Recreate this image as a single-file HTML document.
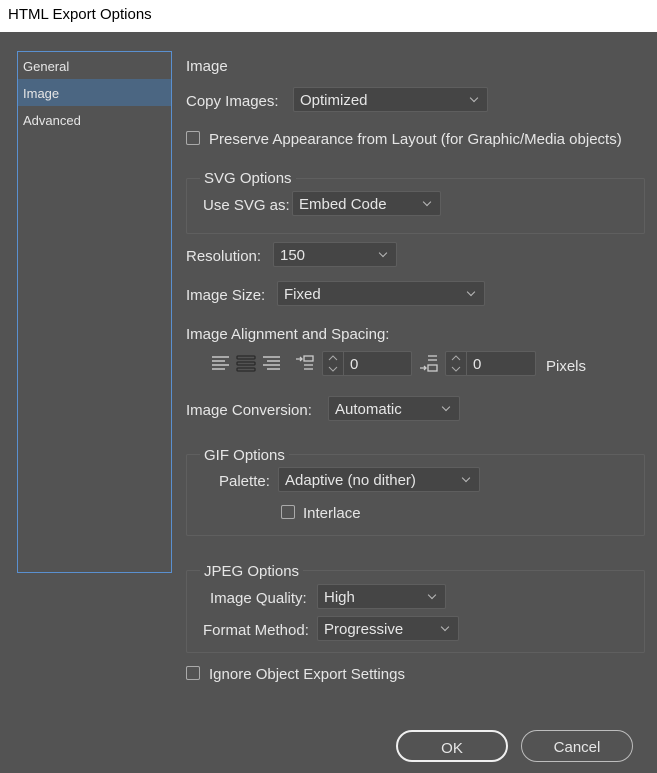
<!DOCTYPE html>
<html><head><style>
*{box-sizing:border-box;margin:0;padding:0}
body{width:657px;height:773px;background:#535353;font-family:"Liberation Sans",sans-serif;font-size:15px;color:#e6e6e6;position:relative;overflow:hidden}
.a{position:absolute;white-space:nowrap}
.t{margin-top:1px}
.title{left:0;top:0;width:657px;height:32px;background:#fff;color:#000;font-size:15px;padding:6px 0 0 8px}
.side{left:17px;top:51px;width:155px;height:522px;border:1px solid #5a90d0}
.side div{height:27px;padding:7px 0 0 5px;font-size:13px}
.dd{position:absolute;height:25px;background:#454545;border:1px solid #5e5e5e;border-radius:2px;padding:4px 0 0 6px}
.dd:after{content:"";position:absolute;right:10px;top:7px;width:5px;height:5px;border-right:1px solid #bbb;border-bottom:1px solid #bbb;transform:rotate(45deg)}
.cb{position:absolute;width:14px;height:14px;border:1px solid #aaa;border-radius:2px}
.grp{position:absolute;border:1px solid #5f5f5f;border-radius:2px}
.btn{position:absolute;height:32px;border-radius:16px;text-align:center;padding-top:8px}
.num{position:absolute;height:25px;background:#454545;border:1px solid #5e5e5e;border-radius:2px}
.num svg{position:absolute;left:0;top:0}
.num .v{position:absolute;left:27px;top:4px}
</style></head><body>
<div class="a title">HTML Export Options</div>
<div class="a side"><div>General</div><div style="background:#4b6682">Image</div><div>Advanced</div></div>

<div class="a t" style="left:186px;top:57px">Image</div>
<div class="a t" style="left:186px;top:92px">Copy Images:</div>
<div class="dd" style="left:293px;top:87px;width:195px">Optimized</div>
<div class="cb" style="left:186px;top:131px"></div>
<div class="a t" style="left:209px;top:130px">Preserve Appearance from Layout (for Graphic/Media objects)</div>

<div class="grp" style="left:186px;top:178px;width:459px;height:56px"></div>
<div class="a t" style="left:200px;top:169px;background:#535353;padding:0 4px">SVG Options</div>
<div class="a t" style="left:203px;top:196px">Use SVG as:</div>
<div class="dd" style="left:292px;top:191px;width:149px">Embed Code</div>

<div class="a t" style="left:186px;top:247px">Resolution:</div>
<div class="dd" style="left:273px;top:242px;width:124px">150</div>
<div class="a t" style="left:186px;top:286px">Image Size:</div>
<div class="dd" style="left:277px;top:281px;width:208px">Fixed</div>
<div class="a t" style="left:186px;top:325px">Image Alignment and Spacing:</div>

<svg class="a" style="left:210px;top:355px" width="80" height="20">
<g stroke="#c8c8c8" stroke-width="1.5"><line x1="2" y1="2" x2="19" y2="2"/><line x1="2" y1="6" x2="15" y2="6"/><line x1="2" y1="10" x2="19" y2="10"/><line x1="2" y1="14" x2="15" y2="14"/></g>
<g stroke="#2a2a2a" fill="none" stroke-width="1.3"><rect x="27" y="1" width="18" height="3" rx="1"/><rect x="27" y="7" width="18" height="3" rx="1"/><rect x="27" y="13" width="18" height="3" rx="1"/></g>
<g stroke="#c8c8c8" stroke-width="1.5"><line x1="53" y1="2" x2="70" y2="2"/><line x1="57" y1="6" x2="70" y2="6"/><line x1="53" y1="10" x2="70" y2="10"/><line x1="57" y1="14" x2="70" y2="14"/></g>
</svg>
<svg class="a" style="left:294px;top:354px" width="24" height="20"><g stroke="#ccc" fill="none" stroke-width="1.3"><path d="M2 5h6M6 3l2 2-2 2"/><rect x="10" y="2" width="9" height="5"/><line x1="10" y1="11" x2="19" y2="11"/><line x1="10" y1="15" x2="19" y2="15"/></g></svg>
<div class="num" style="left:322px;top:351px;width:90px"><svg width="21" height="23"><line x1="20.5" y1="0" x2="20.5" y2="23" stroke="#5e5e5e"/><path d="M6 8l4-4 4 4M6 15l4 4 4-4" stroke="#aaa" fill="none"/></svg><div class="v">0</div></div>
<svg class="a" style="left:418px;top:354px" width="24" height="20"><g stroke="#ccc" fill="none" stroke-width="1.3"><line x1="10" y1="2" x2="19" y2="2"/><line x1="10" y1="6" x2="19" y2="6"/><rect x="10" y="11" width="9" height="6"/><path d="M2 14h6M6 12l2 2-2 2"/></g></svg>
<div class="num" style="left:445px;top:351px;width:91px"><svg width="21" height="23"><line x1="20.5" y1="0" x2="20.5" y2="23" stroke="#5e5e5e"/><path d="M6 8l4-4 4 4M6 15l4 4 4-4" stroke="#aaa" fill="none"/></svg><div class="v">0</div></div>
<div class="a t" style="left:546px;top:357px">Pixels</div>

<div class="a t" style="left:186px;top:401px">Image Conversion:</div>
<div class="dd" style="left:328px;top:396px;width:132px">Automatic</div>

<div class="grp" style="left:186px;top:454px;width:459px;height:82px"></div>
<div class="a t" style="left:200px;top:446px;background:#535353;padding:0 4px">GIF Options</div>
<div class="a t" style="left:219px;top:472px">Palette:</div>
<div class="dd" style="left:278px;top:467px;width:202px">Adaptive (no dither)</div>
<div class="cb" style="left:281px;top:505px"></div>
<div class="a t" style="left:303px;top:504px">Interlace</div>

<div class="grp" style="left:186px;top:570px;width:459px;height:83px"></div>
<div class="a t" style="left:200px;top:562px;background:#535353;padding:0 4px">JPEG Options</div>
<div class="a t" style="left:210px;top:589px">Image Quality:</div>
<div class="dd" style="left:317px;top:584px;width:129px">High</div>
<div class="a t" style="left:203px;top:621px">Format Method:</div>
<div class="dd" style="left:317px;top:616px;width:142px">Progressive</div>

<div class="cb" style="left:186px;top:666px"></div>
<div class="a t" style="left:209px;top:665px">Ignore Object Export Settings</div>

<div class="btn" style="left:396px;top:730px;width:112px;border:2px solid #f0f0f0">OK</div>
<div class="btn" style="left:521px;top:730px;width:112px;border:1px solid #bdbdbd">Cancel</div>
</body></html>
